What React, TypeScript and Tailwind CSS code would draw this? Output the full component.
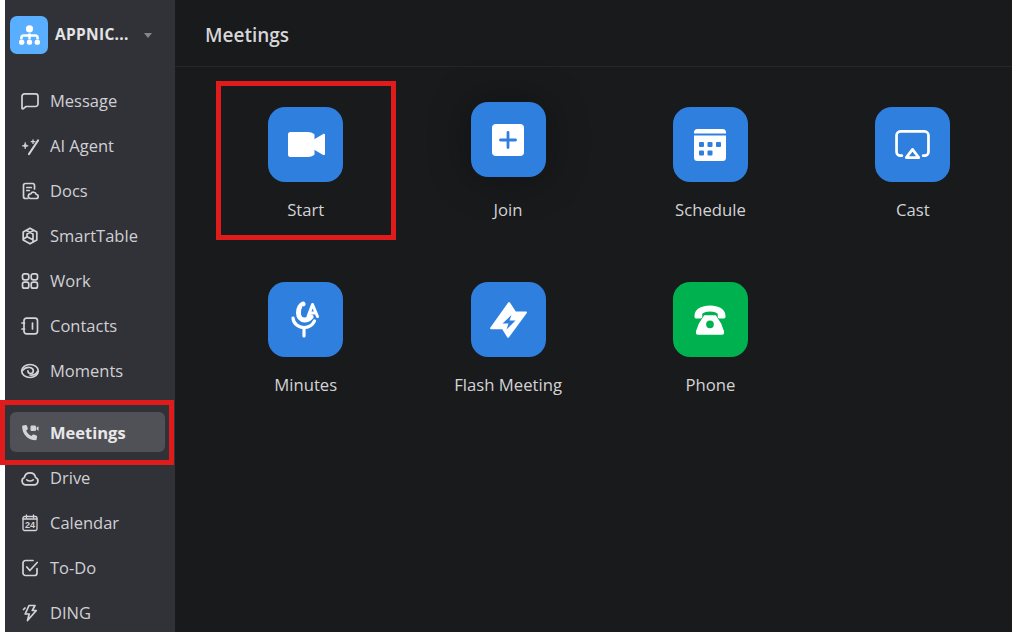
import React from "react";

const S = { fill: "none", stroke: "currentColor", strokeWidth: 1.7, strokeLinecap: "round", strokeLinejoin: "round" } as const;

const Ico = ({ children }: { children: React.ReactNode }) => (
  <svg width="20" height="20" viewBox="0 0 20 20" {...S} className="shrink-0">{children}</svg>
);

const nav: { label: string; icon: React.ReactNode; active?: boolean }[] = [
  { label: "Message", icon: <Ico><path d="M4.500 2.800h11a2.500 2.500 0 0 1 2.500 2.500v7.700a2.500 2.500 0 0 1-2.500 2.500H6l-3 2.300c-.5.300-1 0-1-.5V5.300a2.500 2.500 0 0 1 2.500-2.500z" /></Ico> },
  { label: "AI Agent", icon: <Ico><path d="M18 4.500 9 18" strokeWidth="2.200" /><path d="M5.200 6.800c.3 2 .9 2.600 3 3-2.100.4-2.700 1-3 3-.3-2-.9-2.600-3-3 2.100-.4 2.700-1 3-3z" fill="currentColor" strokeWidth="0.800" /><path d="M13 3.800v3.600M11.200 5.600h3.600" strokeWidth="1.300" /></Ico> },
  { label: "Docs", icon: <Ico><path d="M7.500 17.500H5.500a2 2 0 0 1-2-2v-11a2 2 0 0 1 2-2h7a2 2 0 0 1 2 2V8" /><path d="M6.800 6.500h4.500M6.800 9.500h2.500" /><path d="M10.500 17.500h5.500a2 2 0 0 0 .3-4 3 3 0 0 0-5.600-.6 2.300 2.300 0 0 0-.2 4.600z" /></Ico> },
  { label: "SmartTable", icon: <Ico><path d="M10 2.200l6.800 3.800v8L10 17.800 3.200 14V6z" /><path d="M6.500 4.500 13 8v7.500M13.500 4.500 7 8v2.800l6 3M7 10.800 3.500 13" /></Ico> },
  { label: "Work", icon: <Ico><rect x="2.500" y="2.800" width="6.300" height="6" rx="2" /><rect x="11.200" y="2.800" width="6.300" height="6" rx="2" /><rect x="2.500" y="11.200" width="6.300" height="6" rx="2" /><rect x="11.200" y="11.200" width="6.300" height="6" rx="2" /></Ico> },
  { label: "Contacts", icon: <Ico><rect x="4" y="2.200" width="13.500" height="15.600" rx="2.500" /><path d="M12.500 7v6M2 7h2.500M2 13h2.500" /></Ico> },
  { label: "Moments", icon: <Ico><ellipse cx="10" cy="10" rx="8.300" ry="6.500" /><path d="M2.500 9.500c2-2.500 5-3.500 7.500-3 2 .4 3.300 1.700 3.300 3.300a2.700 2.700 0 0 1-5.400 0" /><path d="M17.500 10.500c-1.500 3-4.500 4-7.500 3.500" /></Ico> },
  { label: "Meetings", active: true, icon: <svg width="20" height="20" viewBox="0 0 20 20" className="shrink-0" fill="currentColor"><path d="M3 2.500 5.800 2c.5 0 .8.200 1 .6l1 2.700c.2.400 0 .8-.3 1.100L6.200 7.600c.8 2.300 2.800 4.400 5.200 5.400l1.300-1.300c.3-.3.700-.4 1.100-.2l2.700 1.100c.4.200.6.600.6 1l-.5 2.900c-.1.500-.5.800-1 .8C8 17.300 2.200 11.200 2.100 3.500c0-.5.400-.9.900-1z" /><rect x="10.500" y="2.500" width="5.500" height="5.500" rx="1.200" /><path d="m16.500 4.500 2-1.300v4.600l-2-1.300z" /></svg> },
  { label: "Drive", icon: <Ico><path d="M6 16.800h8a3.800 3.800 0 0 0 1.600-7.300 5.700 5.700 0 0 0-11.200 0A3.800 3.800 0 0 0 6 16.800z" /><path d="M6.800 11.800c1.700 1.400 4.700 1.400 6.400 0" /></Ico> },
  { label: "Calendar", icon: <svg width="20" height="20" viewBox="0 0 20 20" className="shrink-0"><g {...S} strokeWidth={1.3}><rect x="3" y="3.500" width="14" height="14" rx="1.500" /><path d="M6.500 2v2.500M13.500 2v2.500M3 6h14" /></g><text x="10" y="15.200" textAnchor="middle" fontSize="9" fontWeight="600" fill="currentColor" fontFamily="'Liberation Sans',sans-serif">24</text></svg> },
  { label: "To-Do", icon: <Ico><path d="M17 10.500V15a2.500 2.500 0 0 1-2.500 2.500h-9A2.500 2.500 0 0 1 3 15V5a2.500 2.500 0 0 1 2.500-2.500h7.500" /><path d="m6.800 9 3 3.500 7.400-8" /></Ico> },
  { label: "DING", icon: <Ico><path d="M9 2.500h6L12.300 7.500h4L7.500 17.500l1.700-6.500H5.200z" /><path d="M3.500 6.500 5 5" /></Ico> },
];

const Video = () => (
  <svg width="37" height="25" viewBox="0 0 37 25" fill="#fff" className="ml-px">
    <path d="M2.500 0h17.500c3 0 5 1 6.500 2.500v20c-1.500 1.500-3.500 2.500-6.500 2.500H2.500A2.500 2.500 0 0 1 0 22.500v-20A2.500 2.500 0 0 1 2.500 0z" />
    <path d="M25 8 35.200 2c.8-.4 1.800 0 1.800 1v19c0 1-1 1.400-1.800 1L25 17z" />
  </svg>
);
const Plus = () => (
  <svg width="32" height="32" viewBox="0 0 32 32">
    <rect width="32" height="32" rx="4" fill="#fff" />
    <path d="M16 8.500v15M8.500 16h15" stroke="#2f7fdf" strokeWidth="2.800" strokeLinecap="round" />
  </svg>
);
const Sched = () => (
  <svg width="32" height="32" viewBox="0 0 32 32" fill="#fff">
    <path d="M3.500 0h25A3.500 3.500 0 0 1 32 3.500V4.500H0V3.500A3.500 3.500 0 0 1 3.500 0z" />
    <path d="M0 6.500h32v22a3.500 3.500 0 0 1-3.500 3.500h-25A3.500 3.500 0 0 1 0 28.500z" />
    <g fill="#2f7fdf">
      <rect x="5" y="13" width="5" height="5" rx="1" /><rect x="13.500" y="13" width="5" height="5" rx="1" /><rect x="22" y="13" width="5" height="5" rx="1" />
      <rect x="5" y="21.500" width="5" height="5" rx="1" /><rect x="13.500" y="21.500" width="5" height="5" rx="1" />
    </g>
  </svg>
);
const Cast = () => (
  <svg width="35" height="30" viewBox="0 0 36 31" fill="none" stroke="#fff">
    <path d="M7 26.500H5.500a4 4 0 0 1-4-4v-17a4 4 0 0 1 4-4h25a4 4 0 0 1 4 4v17a4 4 0 0 1-4 4H29" strokeWidth="2.800" strokeLinecap="round" />
    <path d="M18 20 24.500 28.500h-13z" strokeWidth="2.800" strokeLinejoin="round" />
  </svg>
);
const Minutes = () => (
  <svg width="29" height="37" viewBox="0 0 29 37" fill="none" stroke="#fff" strokeLinecap="round">
    <path d="M2 17c.5 5.500 5 9.500 11 9.500 4.500 0 8.500-2.500 10.500-6.500" strokeWidth="3.200" />
    <path d="M13 27v8" strokeWidth="3.200" />
    <path d="M12 3C8.500 5 7.500 8.500 7.500 12c0 4 2.500 7 6 7 2.500 0 4.800-1 6.500-3" strokeWidth="5" strokeLinejoin="round" />
    <path d="M12 5.500C10.800 8 10.500 10.500 11 13" stroke="#2f7fdf" strokeWidth="1.200" />
    <path d="M17 15.500 21.500 3.500 26.500 15.500M18.500 12h6.500" strokeWidth="3" strokeLinejoin="round" />
  </svg>
);
const Flash = () => (
  <svg width="37" height="36" viewBox="0 0 37 36" fill="#fff">
    <path fillRule="evenodd" d="M19 0c.4 0 .7.200.9.500L25.800 9.500h10.200c.8 0 1.200.8.800 1.500L19 35.300c-.5.700-1.300.700-1.800 0l-5-8H1c-.8 0-1.200-.8-.8-1.500L18.200.500c.2-.3.500-.5.800-.5zM21.500 13 12.500 21.500h6L16.500 27.500l9-9h-6z" />
  </svg>
);
const Phone = () => (
  <svg width="32" height="30" viewBox="0 0 33 31" fill="#fff">
    <path d="M.500 11C.500 4 8 .500 16.500.500S32.500 4 32.500 11v1.500c0 .8-.7 1.500-1.500 1.500h-5c-.8 0-1.500-.7-1.500-1.500V9c-2-1.500-5-2.200-8-2.200s-6 .7-8 2.200v3.500c0 .8-.7 1.500-1.500 1.500H2c-.8 0-1.500-.7-1.500-1.500z" />
    <path fillRule="evenodd" d="M10.500 10.500h12L28 19l3 8v2c0 1-.8 1.800-1.800 1.800H3.800C2.800 30.800 2 30 2 29v-2l3-8zM16.500 16a4 4 0 1 0 0 8 4 4 0 0 0 0-8z" />
  </svg>
);

const tiles: { label: string; icon: React.ReactNode; bg: string; shift?: boolean }[] = [
  { label: "Start", icon: <Video />, bg: "bg-[#2f7fdf]" },
  { label: "Join", icon: <Plus />, bg: "bg-[#2f7fdf]", shift: true },
  { label: "Schedule", icon: <Sched />, bg: "bg-[#2f7fdf]" },
  { label: "Cast", icon: <Cast />, bg: "bg-[#2f7fdf]" },
  { label: "Minutes", icon: <Minutes />, bg: "bg-[#2f7fdf]" },
  { label: "Flash Meeting", icon: <Flash />, bg: "bg-[#2f7fdf]" },
  { label: "Phone", icon: <Phone />, bg: "bg-[#00b14f]" },
];

export default function App() {
  return (
    <div className="relative flex h-[632px] w-[1012px] overflow-hidden bg-white font-['Open_Sans','Noto_Sans',sans-serif]">
      <aside className="ml-[5px] flex w-[170px] shrink-0 flex-col bg-[#313238] pl-[5px] pr-[10px] pt-4">
        <div className="flex h-[38px] items-center">
          <div className="flex h-[38px] w-[38px] items-center justify-center rounded-[7px] bg-[#5aaeff]">
            <svg width="23" height="21" viewBox="0 0 24 22" fill="#fff">
              <circle cx="12" cy="4" r="3.800" />
              <path d="M3.500 15v-1.500a2.500 2.500 0 0 1 2.500-2.500h12a2.500 2.500 0 0 1 2.500 2.500V15M12 9v6" fill="none" stroke="#fff" strokeWidth="2.600" />
              <circle cx="3.800" cy="18" r="2.800" /><circle cx="12" cy="18" r="2.800" /><circle cx="20.200" cy="18" r="2.800" />
            </svg>
          </div>
          <span className="ml-[7px] text-[15.500px] font-bold tracking-[0.3px] text-[#e4e4e6]">APPNIC...</span>
          <span className="ml-[15px] h-0 w-0 border-x-[4px] border-t-[5px] border-x-transparent border-t-[#85868b]" />
        </div>
        <nav className="mt-[27px] flex flex-col gap-[5px]">
          {nav.map((n) => (
            <div
              key={n.label}
              className={`flex h-10 shrink-0 items-center gap-[10px] rounded-md pl-[10px] text-[16.500px] ${n.active ? "mb-[1px] mt-[16px] bg-[#505156] pt-[2px] font-bold text-[#e8e8ea]" : "text-[#d0d0d3]"}`}
            >
              <span className="text-[#d4d4d7]">{n.icon}</span>
              {n.label}
            </div>
          ))}
        </nav>
      </aside>
      <main className="flex min-w-0 flex-1 flex-col bg-[#191a1c]">
        <header className="flex h-[67px] shrink-0 items-center border-b border-[#26272a] pl-[30px] pt-1 text-[19px] font-semibold text-[#d6d6d8]">
          Meetings
        </header>
        <div className="ml-[29.500px] mt-10 grid grid-cols-[repeat(4,202.400px)] auto-rows-[175px]">
          {tiles.map((t) => (
            <div key={t.label} className="flex flex-col items-center">
              <div
                className={`flex h-[75px] w-[75px] items-center justify-center rounded-[17px] ${t.bg} ${t.shift ? "-translate-y-[5px] shadow-[0_0_40px_rgba(0,0,0,0.35)]" : ""}`}
              >
                {t.icon}
              </div>
              <span className="mt-[16px] text-[16.700px] leading-[24px] text-[#d3d3d5]">{t.label}</span>
            </div>
          ))}
        </div>
      </main>
      <div className="absolute left-[216px] top-[81px] h-[159px] w-[180px] border-[5px] border-[#e01b1b]" />
      <div className="absolute left-0 top-[400px] h-[65px] w-[174px] border-[5px] border-[#e01b1b]" />
    </div>
  );
}
